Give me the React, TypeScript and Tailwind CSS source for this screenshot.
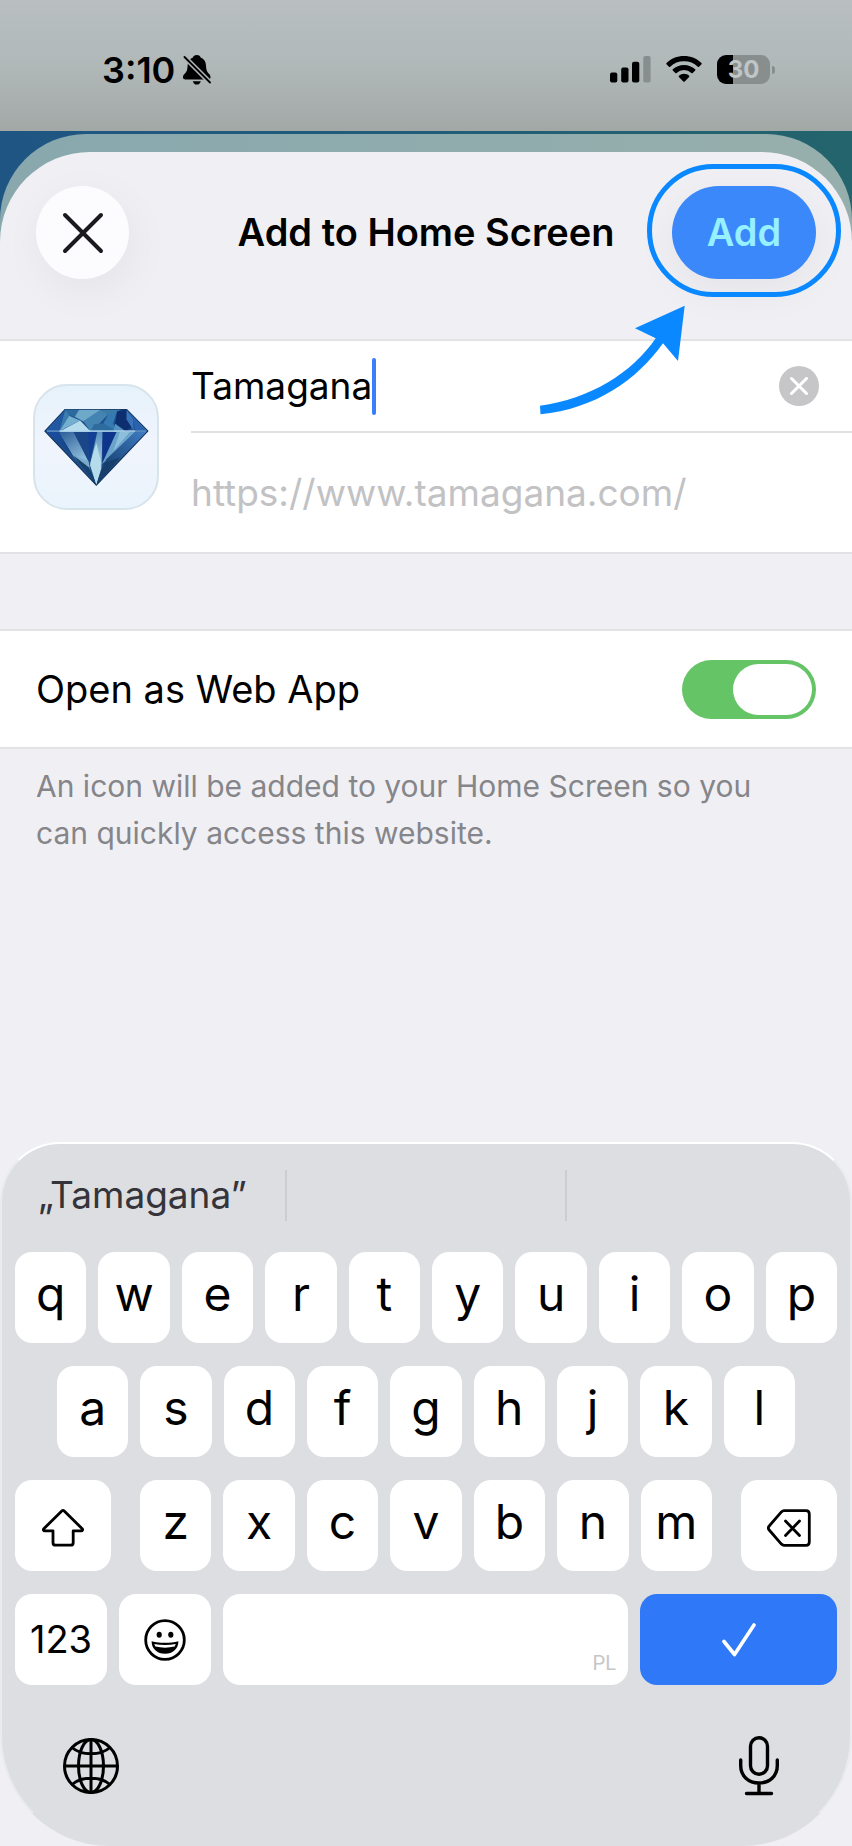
import { useState } from 'react'
import type { ReactNode } from 'react'

const TOP_ROW = ['q', 'w', 'e', 'r', 't', 'y', 'u', 'i', 'o', 'p']
const HOME_ROW = ['a', 's', 'd', 'f', 'g', 'h', 'j', 'k', 'l']
const BOTTOM_ROW = ['z', 'x', 'c', 'v', 'b', 'n', 'm']

// ---------- icons ----------

function BellOffIcon() {
  return (
    <svg viewBox="0 0 28 30" className="h-[30px] w-7" aria-label="Silent mode">
      <path
        d="M13.8 0c2.4 0 3.4 1.2 3.8 2.5 3.400 1.300 5.200 4.200 5.400 7.900.2 4.600.8 6 3.200 8.600 1 1.100 1.300 2.100 1.300 3.200 0 1.500-1 2.300-2.500 2.300H2.500C1 24.500 0 23.700 0 22.300c0-1.200.4-2.100 1.400-3.200 2.400-2.600 3-4 3.200-8.700.2-3.700 2-6.600 5.300-7.900C10.400 1.200 11.400 0 13.800 0Z"
        fill="#000"
      />
      <path d="M9.800 26.200h8c-.5 2-2 3.400-4 3.400s-3.500-1.400-4-3.400Z" fill="#000" />
      <path d="M-1 -.5 29 29.500" stroke="#aeb5b5" strokeWidth="5" />
      <path d="M1.500 2 27 27.500" stroke="#000" strokeWidth="1.800" strokeLinecap="round" />
    </svg>
  )
}

function SignalIcon() {
  return (
    <svg viewBox="0 0 41 27" className="h-[27px] w-[41px]" aria-label="Mobile signal">
      <rect x="0" y="16.500" width="7.300" height="10" rx="2" />
      <rect x="11.200" y="11.500" width="7.300" height="15" rx="2" />
      <rect x="22" y="5.800" width="7.300" height="20.700" rx="2" />
      <rect x="33.300" y="0" width="7.300" height="26.500" rx="2" fill="#888e8e" />
    </svg>
  )
}

function WifiIcon() {
  return (
    <svg viewBox="0 0 36 27" className="h-[27px] w-9" aria-label="Wi-Fi">
      <path d="M18 0c6.700 0 12.900 2.600 17.500 7 .4.400.4.900 0 1.300l-2.400 2.400c-.4.400-.9.400-1.300 0A20 20 0 0 0 18 5.300a20 20 0 0 0-13.800 5.400c-.4.400-.9.400-1.300 0L.5 8.300c-.4-.4-.4-.9 0-1.300C5.100 2.600 11.300 0 18 0Z" />
      <path d="M18 8.900c4.300 0 8.200 1.600 11.200 4.300.4.400.4.900 0 1.300l-2.500 2.400c-.4.400-.9.400-1.300 0a11 11 0 0 0-14.800 0c-.4.400-.9.400-1.300 0l-2.500-2.400c-.4-.4-.4-.9 0-1.300 3-2.700 6.900-4.300 11.200-4.300Z" />
      <path d="M18 17.800c2 0 3.800.7 5.100 1.900.4.400.4.800 0 1.200l-4.400 4.600c-.4.400-1 .4-1.400 0l-4.400-4.600c-.4-.4-.4-.8 0-1.200a7.600 7.600 0 0 1 5.100-1.900Z" />
    </svg>
  )
}

function DiamondIcon() {
  return (
    <svg viewBox="44 46 368 368" className="h-full w-full" aria-hidden="true">
      <defs>
        <linearGradient id="facetA" x1="0" y1="0" x2="1" y2="1">
          <stop offset="0" stopColor="#1a4ea4" />
          <stop offset="1" stopColor="#16437c" />
        </linearGradient>
        <linearGradient id="facetB" x1="0" y1="0" x2="0.600" y2="1">
          <stop offset="0" stopColor="#2c5d97" />
          <stop offset="1" stopColor="#8cbbdb" />
        </linearGradient>
        <linearGradient id="facetC" x1="0" y1="0" x2="0" y2="1">
          <stop offset="0" stopColor="#5c93c0" />
          <stop offset="1" stopColor="#dcf1f9" />
        </linearGradient>
        <linearGradient id="facetD" x1="1" y1="0" x2="0" y2="1">
          <stop offset="0" stopColor="#3f7cc4" />
          <stop offset="1" stopColor="#123a68" />
        </linearGradient>
      </defs>
      {/* silhouette */}
      <path d="M74 182 135 117H320L384 182 229 345Z" fill="#1d4f8d" stroke="#16345c" strokeWidth="4" strokeLinejoin="round" />
      {/* crown */}
      <path d="M76 181 135 118 118 182Z" fill="#2257a2" />
      <path d="M135 118h42l-30 18-29 46Z" fill="#397caf" />
      <path d="M147 136 180 150 118 182Z" fill="#74afd0" />
      <path d="M135 118h42l-12 22-20-8Z" fill="#2d6b9e" />
      <path d="M177 118h66l-53 35-26-14Z" fill="#6fa9ca" />
      <path d="m180 150 32 33h-94Z" fill="#b5dcec" />
      <path d="m190 152 53-34 22 13-30 32-23 20Z" fill="#4484b3" />
      <path d="M243 118h61l-39 18Z" fill="#3b7baa" />
      <path d="m212 183 10-22 34-3 34 25Z" fill="#2e6b9f" />
      <path d="M265 132 292 120 280 158 290 183 250 158Z" fill="#357ab0" />
      <path d="M292 122 320 118 342 166 318 183 286 160Z" fill="#0d2f70" />
      <path d="m320 118 20 28 2 36-22-36Z" fill="#3974ba" />
      <path d="m286 160 32 23h-38Z" fill="#5493c0" />
      <path d="M320 118 383 181H346l-6-36Z" fill="#2a63ad" />
      {/* pavilion */}
      <path d="M78 185h40l44 77Z" fill="url(#facetA)" />
      <path d="M118 185 206 274 212 310 160 258Z" fill="#79a9cb" />
      <path d="M118 185h50l38 89-48-20Z" fill="url(#facetB)" />
      <path d="M160 185h44l2 90Z" fill="#1b4788" />
      <path d="M204 185h26l-22 90Z" fill="#133f94" />
      <path d="M232 185h16l-4 110-15 48-19-58Z" fill="url(#facetC)" />
      <path d="M248 185h42l-42 92Z" fill="#0f348b" />
      <path d="M290 185h56l-88 86-12 10Z" fill="#6ba3ca" />
      <path d="M346 185h34L250 318l8-50Z" fill="url(#facetD)" />
      <path d="M300 185h30l-50 58Z" fill="#8dbfdc" />
      <path d="M160 256 207 292 229 342Z" fill="#164169" />
      <path d="M252 278 300 262 229 343Z" fill="#173f6c" />
      <path d="m229 218 15 60-15 65-18-65Z" fill="#b4dceb" />
      <path d="M80 182H380" stroke="#7fb5df" strokeWidth="3" />
      <path d="M118 182H346" stroke="#cdeafa" strokeWidth="3" />
    </svg>
  )
}

function SmileyIcon() {
  return (
    <svg viewBox="0 0 42 42" className="size-[42px]" aria-hidden="true">
      <circle cx="21" cy="21" r="19.300" fill="none" stroke="#000" strokeWidth="2.800" />
      <ellipse cx="15.200" cy="15.800" rx="2.600" ry="3" />
      <ellipse cx="26.800" cy="15.800" rx="2.600" ry="3" />
      <path d="M7.600 22.200c8.500 2.200 18.300 2.200 26.800 0 0 7.500-5.500 12.600-13.400 12.600S7.600 29.700 7.600 22.200Z" />
      <path d="M10.200 24.900c7 1.500 14.600 1.500 21.600 0l-1.200 2.700c-6.200 1.400-13 1.400-19.200 0Z" fill="#fff" />
    </svg>
  )
}

function GlobeIcon() {
  return (
    <svg viewBox="0 0 56 56" className="size-14" fill="none" stroke="#000" strokeWidth="3" aria-hidden="true">
      <circle cx="28" cy="28" r="26.500" />
      <ellipse cx="28" cy="28" rx="12.500" ry="26.500" />
      <path d="M28 1.500v53M1.500 28h53M9 9.500c9.500 8.400 28.500 8.400 38 0M9 46.500c9.500-8.400 28.500-8.400 38 0" />
    </svg>
  )
}

function MicIcon() {
  return (
    <svg viewBox="0 0 40 60" className="h-[60px] w-10" fill="none" stroke="#000" strokeWidth="3.400" strokeLinecap="round" aria-hidden="true">
      <rect x="11.500" y="1.700" width="17" height="36.500" rx="8.500" />
      <path d="M1.700 24v5.500C1.700 40 9.500 47 20 47s18.300-7 18.300-17.500V24M20 47v10.500M7.500 57.500h25" />
    </svg>
  )
}

function ShiftIcon() {
  return (
    <svg viewBox="0 0 42 38" className="h-[38px] w-[42px]" fill="none" stroke="#000" strokeWidth="2.800" strokeLinejoin="round" aria-hidden="true">
      <path d="M19.800 2.100a1.700 1.700 0 0 1 2.400 0l18 17.600c.8.900.3 2.100-.9 2.100h-8.100v11.900c0 1.500-1 2.500-2.500 2.500H13.500c-1.500 0-2.500-1-2.500-2.500V21.800H2.700c-1.200 0-1.700-1.200-.9-2.100Z" />
    </svg>
  )
}

function DeleteIcon() {
  return (
    <svg viewBox="0 0 44 38" className="h-[38px] w-11" fill="none" stroke="#000" strokeWidth="2.800" strokeLinecap="round" strokeLinejoin="round" aria-hidden="true">
      <path d="M17 1.700h22c2 0 3.300 1.300 3.300 3.300v28c0 2-1.300 3.300-3.300 3.300H17c-1.200 0-1.800-.4-2.600-1.200L2.200 21c-1.300-1.400-1.300-2.600 0-4L14.400 2.900c.8-.8 1.400-1.200 2.600-1.200Z" />
      <path d="m18.500 12 14 14.500M32.500 12l-14 14.500" />
    </svg>
  )
}

// ---------- keyboard ----------

type KeyProps = { label: string; onPress?: () => void; className?: string; children?: ReactNode }

function Key({ label, onPress, className = 'flex-1 pb-2 text-5xl', children }: KeyProps) {
  return (
    <button
      type="button"
      aria-label={label}
      onClick={onPress}
      className={`flex h-[91px] min-w-0 items-center justify-center rounded-[17px] bg-white text-black ${className}`}
    >
      {children ?? label}
    </button>
  )
}

function Keyboard({ word, onType, onDelete }: { word: string; onType: (s: string) => void; onDelete: () => void }) {
  const letters = (row: string[]) => row.map((l) => <Key key={l} label={l} onPress={() => onType(l)} />)

  return (
    <section aria-label="Keyboard" className="rounded-t-[60px] rounded-b-[110px] border-2 border-x-white/40 border-t-white border-b-transparent bg-[#dddee2]">
      {/* suggestions */}
      <div className="grid h-[108px] grid-cols-3 items-center pb-1.5 text-[37px] text-[#34343a]">
        <button type="button" className="px-9 text-left">„{word}”</button>
        <span className="h-[51px] border-x-2 border-[#cccdd2]" />
      </div>

      <div className="flex flex-col gap-[23px] px-[13px]">
        <div className="flex gap-3">{letters(TOP_ROW)}</div>
        <div className="flex gap-3 px-[42px]">{letters(HOME_ROW)}</div>
        <div className="flex gap-[29px]">
          <Key label="Shift" className="w-24 pt-1">
            <ShiftIcon />
          </Key>
          <div className="flex flex-1 gap-3">{letters(BOTTOM_ROW)}</div>
          <Key label="Delete" onPress={onDelete} className="w-24 pt-1">
            <DeleteIcon />
          </Key>
        </div>
        <div className="flex gap-3">
          <Key label="123" className="w-[92px] text-[38px]" />
          <Key label="Emoji" className="w-[92px]">
            <SmileyIcon />
          </Key>
          <button
            type="button"
            aria-label="Space"
            onClick={() => onType(' ')}
            className="flex h-[91px] flex-1 items-end justify-end rounded-[17px] bg-white px-3 pb-2 font-['Liberation_Sans_Narrow','Roboto',sans-serif] text-xl text-[#c6c6c8]"
          >
            PL
          </button>
          <button type="button" aria-label="Done" className="flex h-[91px] w-[197px] items-center justify-center rounded-[17px] bg-[#2f78f8]">
            <svg viewBox="0 0 34 34" className="size-[34px]" fill="none" stroke="#fff" strokeWidth="3.600" strokeLinecap="round" strokeLinejoin="round" aria-hidden="true">
              <path d="M2 18.500 12.500 31.500 32 2" />
            </svg>
          </button>
        </div>
      </div>

      <div className="flex items-center justify-between px-[61px] pt-[51px] pb-12">
        <button type="button" aria-label="Next keyboard">
          <GlobeIcon />
        </button>
        <button type="button" aria-label="Dictate" className="px-2.5">
          <MicIcon />
        </button>
      </div>
    </section>
  )
}

// ---------- sheet ----------

function StatusBar() {
  return (
    <header className="flex h-[131px] items-center justify-between bg-gradient-to-b from-[#b9bfc1] via-[#b1b8b8] to-[#a1a8a6] pt-2 pr-[77px] pl-[102px]">
      <div className="flex items-center gap-2">
        <time className="text-4xl font-semibold text-black">3:10</time>
        <BellOffIcon />
      </div>
      <div className="flex items-center gap-[15px]">
        <SignalIcon />
        <WifiIcon />
        <div className="flex items-center gap-0.5">
          <span className="flex h-[29px] w-[53px] items-center justify-center rounded-[9px] bg-gradient-to-r from-black from-30% to-[#888e8e] to-30% text-2xl font-bold text-[#c0c5c6]">
            30
          </span>
          <span className="h-2 w-[3px] rounded-r-full bg-[#888e8e]" />
        </div>
      </div>
    </header>
  )
}

export default function App() {
  const [name, setName] = useState('Tamagana')
  const [webApp, setWebApp] = useState(true)

  return (
    <div className="flex min-h-screen flex-col bg-[#f0f0f4] font-['Inter','Liberation_Sans',sans-serif] text-black">
      <StatusBar />

      <div className="flex flex-1 flex-col bg-gradient-to-r from-[#1f5583] to-[#24646c] pt-[3px]">
        <div className="flex flex-1 flex-col rounded-t-[86px] bg-gradient-to-r from-[#88a8ae] to-[#97afac] pt-[18px]">
          <main className="flex flex-1 flex-col rounded-t-[90px] bg-[#f0f0f4]">
            <div className="grid h-[187px] grid-cols-[144px_1fr_144px] items-start px-9 pt-[34px]">
              <button
                type="button"
                aria-label="Close"
                className="flex size-[93px] items-center justify-center rounded-full bg-[#fcfcfe] shadow-[4px_12px_44px_rgba(0,0,0,0.05)]"
              >
                <svg viewBox="0 0 42 42" className="size-[42px]" stroke="#1b1b1f" strokeWidth="4" strokeLinecap="round" aria-hidden="true">
                  <path d="m3 3 36 36M39 3 3 39" />
                </svg>
              </button>
              <h1 className="text-center text-[38px] leading-[93px] font-semibold whitespace-nowrap">Add to Home Screen</h1>
              <div className="relative">
                <button
                  type="button"
                  className="h-[93px] w-full rounded-full bg-[#3b88fb] text-[38px] font-semibold text-[#96f0ff] shadow-[0_12px_44px_rgba(0,0,0,0.05)]"
                >
                  Add
                </button>
                {/* callout ring and arrow */}
                <span className="pointer-events-none absolute -inset-x-[25px] -top-[22px] -bottom-[18px] rounded-full border-5 border-[#0a88ff]" />
                <svg viewBox="0 0 145 110" className="pointer-events-none absolute top-[119px] right-[131px] h-[110px] w-[145px]" fill="#0a88ff" aria-hidden="true">
                  <path d="M0 100.700C50 94 92 68 115.700 33.300L95 23.300 144.700.7 138 56 123 38.300C97 75 55 104 .5 109.300Z" />
                </svg>
              </div>
            </div>

            <section className="flex items-center gap-8 border-y-2 border-[#e2e2e5] bg-white pl-[33px]">
              <div className="size-[126px] shrink-0 overflow-hidden rounded-[34px] border-2 border-[#d8e4ec] bg-gradient-to-b from-[#e6f2fb] via-[#f0f4fd] to-[#eaf4fc]">
                <DiamondIcon />
              </div>
              <div className="min-w-0 flex-1">
                <div className="flex h-[92px] items-center border-b-2 border-[#e2e2e5] pr-[33px]">
                  <input
                    aria-label="Name"
                    value={name}
                    onChange={(e) => setName(e.target.value)}
                    className="field-sizing-content p-0 text-[37px] outline-none"
                  />
                  <span className="h-[57px] w-1 shrink-0 rounded-full bg-[#3b7dfa]" />
                  <button
                    type="button"
                    aria-label="Clear"
                    onClick={() => setName('')}
                    className="ml-auto flex size-10 items-center justify-center rounded-full bg-[#c6c6c8]"
                  >
                    <svg viewBox="0 0 18 18" className="size-[18px]" stroke="#fff" strokeWidth="3" strokeLinecap="round" aria-hidden="true">
                      <path d="m1.500 1.500 15 15M16.500 1.500l-15 15" />
                    </svg>
                  </button>
                </div>
                <p className="flex h-[119px] items-center text-[37px] text-[#c2c2c4]">https://www.tamagana.com/</p>
              </div>
            </section>

            <section className="mt-[75px] flex h-[120px] items-center justify-between border-y-2 border-[#e2e2e5] bg-white px-9">
              <label htmlFor="web-app" className="text-[38px]">
                Open as Web App
              </label>
              <input
                id="web-app"
                type="checkbox"
                role="switch"
                checked={webApp}
                onChange={(e) => setWebApp(e.target.checked)}
                className="flex h-[59px] w-[134px] appearance-none items-center rounded-full bg-[#d5d5d9] px-1 before:h-[51px] before:w-[79px] before:rounded-full before:bg-white checked:justify-end checked:bg-[#65c466]"
              />
            </section>
            <p className="pt-3.5 pr-16 pl-9 text-[30px] leading-[47px] text-[#85858a]">
              An icon will be added to your Home Screen so you can quickly access this website.
            </p>

            <div className="min-h-12 flex-1" />
            <Keyboard word={name} onType={(s) => setName(name + s)} onDelete={() => setName(name.slice(0, -1))} />
          </main>
        </div>
      </div>
    </div>
  )
}
